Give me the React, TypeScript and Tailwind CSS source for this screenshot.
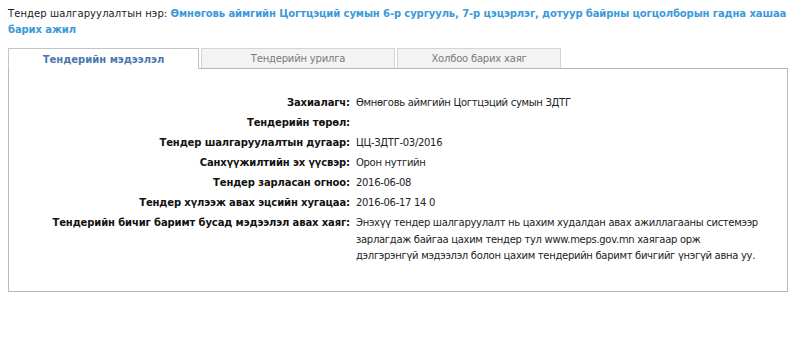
const rows: [string, string][] = [
  ["Захиалагч:", "Өмнөговь аймгийн Цогтцэций сумын ЗДТГ"],
  ["Тендерийн төрөл:", ""],
  ["Тендер шалгаруулалтын дугаар:", "ЦЦ-ЗДТГ-03/2016"],
  ["Санхүүжилтийн эх үүсвэр:", "Орон нутгийн"],
  ["Тендер зарласан огноо:", "2016-06-08"],
  ["Тендер хүлээж авах эцсийн хугацаа:", "2016-06-17 14 0"],
];

export default function App() {
  return (
    <div className="font-['DejaVu_Sans',sans-serif] text-[10px] text-[#333] px-2 pt-[6px] bg-white min-h-[343px]">
      <div className="leading-[16px] text-[#222] tracking-[0.1px]">
        Тендер шалгаруулалтын нэр:{" "}
        <span className="font-bold text-[#3a9ad9] tracking-[-0.1px]">
          Өмнөговь аймгийн Цогтцэций сумын 6-р сургууль, 7-р цэцэрлэг, дотуур байрны цогцолборын гадна хашаа барих ажил
        </span>
      </div>

      <div className="mt-[10px] flex items-end">
        <div className="w-[191px] h-[21px] border border-b-0 border-[#c4c4c4] bg-white flex items-center justify-center font-bold text-[#4a78ad] -mb-px relative z-10">
          Тендерийн мэдээлэл
        </div>
        <div className="ml-[2px] w-[194px] h-[20px] border border-b-0 border-[#d4d4d4] bg-[#f3f3f3] flex items-center justify-center text-[#7a7a7a] tracking-[-0.2px]">
          Тендерийн урилга
        </div>
        <div className="ml-[2px] w-[164px] h-[20px] border border-b-0 border-[#d4d4d4] bg-[#f3f3f3] flex items-center justify-center text-[#7a7a7a] tracking-[-0.2px]">
          Холбоо барих хаяг
        </div>
      </div>

      <div className="w-[780px] h-[224px] border border-[#b8b8b8] pt-[24px]">
        <div className="grid grid-cols-[344px_1fr] leading-[16px]">
          {rows.map(([k, v]) => (
            <div key={k} className="contents">
              <div className="h-[20px] text-right pr-[3px] py-[2px] font-bold text-[#111] tracking-[-0.12px]">{k}</div>
              <div className="h-[20px] pl-[3px] py-[2px] text-[#222] tracking-[-0.3px]">{v}</div>
            </div>
          ))}
          <div className="text-right pr-[3px] py-[2px] font-bold text-[#111] tracking-[-0.12px]">
            Тендерийн бичиг баримт бусад мэдээлэл авах хаяг:
          </div>
          <div className="pl-[3px] py-[2px] text-[#222] leading-[16.5px] tracking-[-0.3px]">
            Энэхүү тендер шалгаруулалт нь цахим худалдан авах ажиллагааны системээр
            <br />
            зарлагдаж байгаа цахим тендер тул www.meps.gov.mn хаягаар орж
            <br />
            дэлгэрэнгүй мэдээлэл болон цахим тендерийн баримт бичгийг үнэгүй авна уу.
          </div>
        </div>
      </div>
    </div>
  );
}
